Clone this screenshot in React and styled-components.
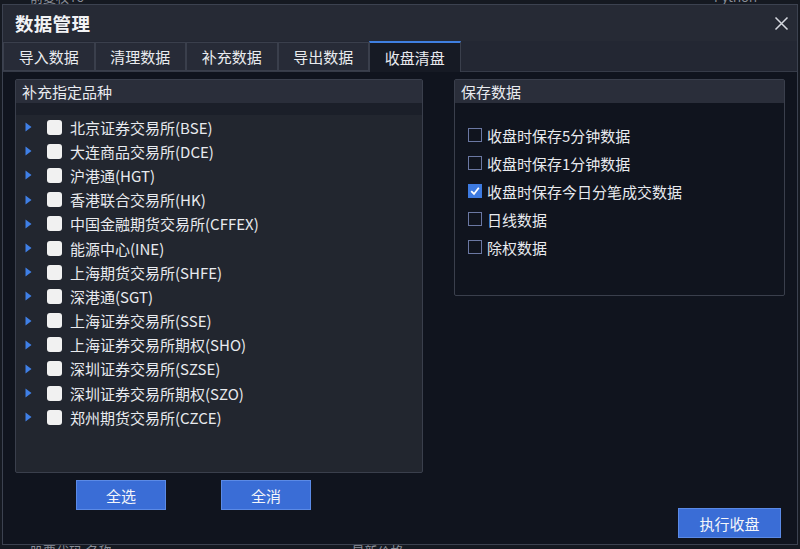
import React from "react";
import styled, { createGlobalStyle } from "styled-components";

const Global = createGlobalStyle`
  html, body { margin: 0; padding: 0; background: #151921; overflow: hidden; }
  * { box-sizing: border-box; }
  body { font-family: "Noto Sans", "Noto Sans CJK SC", sans-serif; }
`;

const Screen = styled.div`
  width: 800px;
  height: 549px;
  display: flex;
  flex-direction: column;
  background: #151921;
  overflow: hidden;
`;

const BgStrip = styled.div`
  height: ${(p) => p.$h}px;
  flex: none;
  overflow: hidden;
  display: flex;
  align-items: ${(p) => (p.$top ? "flex-end" : "flex-start")};
  gap: 40px;
  padding-left: 30px;
  color: #8b8f99;
  font-size: 13px;
`;

const StripText = styled.span`
  display: block;
  height: 4px;
  line-height: 13px;
  overflow: hidden;
  white-space: nowrap;
  margin-left: ${(p) => p.$ml || 0}px;
  span { display: block; margin-top: ${(p) => p.$shift}px; }
`;

const Dialog = styled.div`
  flex: none;
  height: 541px;
  margin: 0 2px 0 2px;
  border: 1px solid #3c4250;
  display: flex;
  flex-direction: column;
  background: #10141e;
`;

const TitleBar = styled.div`
  height: 36px;
  flex: none;
  background: #262a35;
  display: flex;
  align-items: center;
  justify-content: space-between;
  padding: 0 8px 0 12px;
`;

const Title = styled.div`
  color: #f2f3f5;
  font-family: "Noto Sans CJK SC", sans-serif;
  font-size: 18.5px;
  font-weight: 600;
  letter-spacing: 0.3px;
`;

const CloseBtn = styled.div`
  width: 16px;
  height: 16px;
  display: flex;
  align-items: center;
  justify-content: center;
`;

const TabBar = styled.div`
  height: 31px;
  flex: none;
  background: #232733;
  border-bottom: 1px solid #363b48;
  display: flex;
  align-items: flex-end;
`;

const Tab = styled.div`
  width: 91.5px;
  height: ${(p) => (p.$active ? 31 : 29)}px;
  margin-bottom: ${(p) => (p.$active ? -1 : 0)}px;
  background: ${(p) => (p.$active ? "#161a24" : "#272b37")};
  border: 1px solid #3a3f4c;
  border-top: ${(p) => (p.$active ? "2px solid #3f7fe0" : "1px solid #3a3f4c")};
  border-bottom: ${(p) => (p.$active ? "none" : "1px solid #3a3f4c")};
  display: flex;
  align-items: center;
  justify-content: center;
  color: #e9ebef;
  font-family: "Noto Sans CJK SC", sans-serif;
  font-size: 15px;
  padding-bottom: ${(p) => (p.$active ? 1 : 0)}px;
`;

const Content = styled.div`
  flex: 1;
  display: flex;
  padding: 7px 0 6px 12px;
  gap: 31px;
`;

const LeftCol = styled.div`
  width: 408px;
  display: flex;
  flex-direction: column;
`;

const RightCol = styled.div`
  width: 331px;
  display: flex;
  flex-direction: column;
  justify-content: space-between;
`;

const Group = styled.div`
  height: ${(p) => p.$h}px;
  border: 1px solid #3a3f4c;
  border-radius: 2px;
  display: flex;
  flex-direction: column;
  background: ${(p) => p.$bg};
`;

const GroupHeader = styled.div`
  height: 23px;
  flex: none;
  background: #2a2e3a;
  color: #e9ebef;
  font-family: "Noto Sans CJK SC", sans-serif;
  font-size: 15px;
  line-height: 23px;
  padding-left: 6px;
`;

const HeaderStrip = styled.div`
  height: 12px;
  flex: none;
  background: #1b1f29;
`;

const List = styled.div`
  flex: 1;
  display: flex;
  flex-direction: column;
`;

const Row = styled.div`
  height: 24.2px;
  display: flex;
  align-items: center;
  padding-left: 9px;
`;

const Arrow = styled.svg`
  width: 7px;
  height: 10px;
  flex: none;
  margin-right: 15px;
`;

const WhiteBox = styled.div`
  width: 15px;
  height: 15px;
  flex: none;
  background: #f1f1f1;
  border-radius: 3px;
  margin-right: 8px;
`;

const ItemText = styled.span`
  color: #e8eaee;
  font-family: "Noto Sans CJK SC", sans-serif;
  font-size: 15px;
  line-height: 1;
  white-space: nowrap;
`;

const OptList = styled.div`
  display: flex;
  flex-direction: column;
  padding-top: 18px;
  padding-left: 13px;
`;

const OptRow = styled.div`
  height: 28px;
  display: flex;
  align-items: center;
`;

const OptBox = styled.div`
  width: 14px;
  height: 14px;
  flex: none;
  margin-right: 5px;
  border: 1.5px solid ${(p) => (p.$checked ? "#3d7ae0" : "#6b78a3")};
  background: ${(p) => (p.$checked ? "#3d7ae0" : "transparent")};
  display: flex;
  align-items: center;
  justify-content: center;
`;

const ButtonRow = styled.div`
  display: flex;
  gap: 55px;
  padding-left: 61px;
  margin-top: 7px;
`;

const Button = styled.button`
  width: ${(p) => p.$w}px;
  height: 30px;
  background: #3a6dd6;
  border: 1px solid #5b8ae6;
  color: #f4f6fa;
  font-family: "Noto Sans CJK SC", sans-serif;
  font-size: 15px;
  padding: 0;
  cursor: pointer;
  align-self: ${(p) => p.$align || "auto"};
  margin-right: ${(p) => p.$mr || 0}px;
`;

const exchanges = [
  "北京证券交易所(BSE)",
  "大连商品交易所(DCE)",
  "沪港通(HGT)",
  "香港联合交易所(HK)",
  "中国金融期货交易所(CFFEX)",
  "能源中心(INE)",
  "上海期货交易所(SHFE)",
  "深港通(SGT)",
  "上海证券交易所(SSE)",
  "上海证券交易所期权(SHO)",
  "深圳证券交易所(SZSE)",
  "深圳证券交易所期权(SZO)",
  "郑州期货交易所(CZCE)",
];

const options = [
  { label: "收盘时保存5分钟数据", checked: false },
  { label: "收盘时保存1分钟数据", checked: false },
  { label: "收盘时保存今日分笔成交数据", checked: true },
  { label: "日线数据", checked: false },
  { label: "除权数据", checked: false },
];

const tabs = ["导入数据", "清理数据", "补充数据", "导出数据", "收盘清盘"];

export default function App() {
  return (
    <>
      <Global />
      <Screen>
        <BgStrip $h={4} $top>
          <StripText $shift={-9}><span>前复权16</span></StripText>
          <StripText $shift={-9} $ml={590}><span>Python</span></StripText>
        </BgStrip>
        <Dialog>
          <TitleBar>
            <Title>数据管理</Title>
            <CloseBtn>
              <svg width="15" height="15" viewBox="0 0 15 15">
                <path d="M1.5 1.5 L13.5 13.5 M13.5 1.5 L1.5 13.5" stroke="#d6d9e0" strokeWidth="1.5" />
              </svg>
            </CloseBtn>
          </TitleBar>
          <TabBar>
            {tabs.map((t, i) => (
              <Tab key={t} $active={i === 4}>{t}</Tab>
            ))}
          </TabBar>
          <Content>
            <LeftCol>
              <Group $h={394} $bg="#22262f">
                <GroupHeader>补充指定品种</GroupHeader>
                <HeaderStrip />
                <List>
                  {exchanges.map((e) => (
                    <Row key={e}>
                      <Arrow viewBox="0 0 7 10">
                        <polygon points="0.5,0.5 6.5,5 0.5,9.5" fill="#3f7fe6" />
                      </Arrow>
                      <WhiteBox />
                      <ItemText>{e}</ItemText>
                    </Row>
                  ))}
                </List>
              </Group>
              <ButtonRow>
                <Button $w={90}>全选</Button>
                <Button $w={90}>全消</Button>
              </ButtonRow>
            </LeftCol>
            <RightCol>
              <Group $h={217} $bg="#10141e">
                <GroupHeader>保存数据</GroupHeader>
                <OptList>
                  {options.map((o) => (
                    <OptRow key={o.label}>
                      <OptBox $checked={o.checked}>
                        {o.checked && (
                          <svg width="10" height="10" viewBox="0 0 10 10">
                            <path d="M1.2 5.2 L4 8 L8.8 1.8" stroke="#ffffff" strokeWidth="1.8" fill="none" />
                          </svg>
                        )}
                      </OptBox>
                      <ItemText>{o.label}</ItemText>
                    </OptRow>
                  ))}
                </OptList>
              </Group>
              <Button $w={103} $align="flex-end" $mr={4}>执行收盘</Button>
            </RightCol>
          </Content>
        </Dialog>
        <BgStrip $h={4}>
          <StripText $shift={0}><span>股票代码 名称</span></StripText>
          <StripText $shift={0} $ml={200}><span>最新价格</span></StripText>
        </BgStrip>
      </Screen>
    </>
  );
}
